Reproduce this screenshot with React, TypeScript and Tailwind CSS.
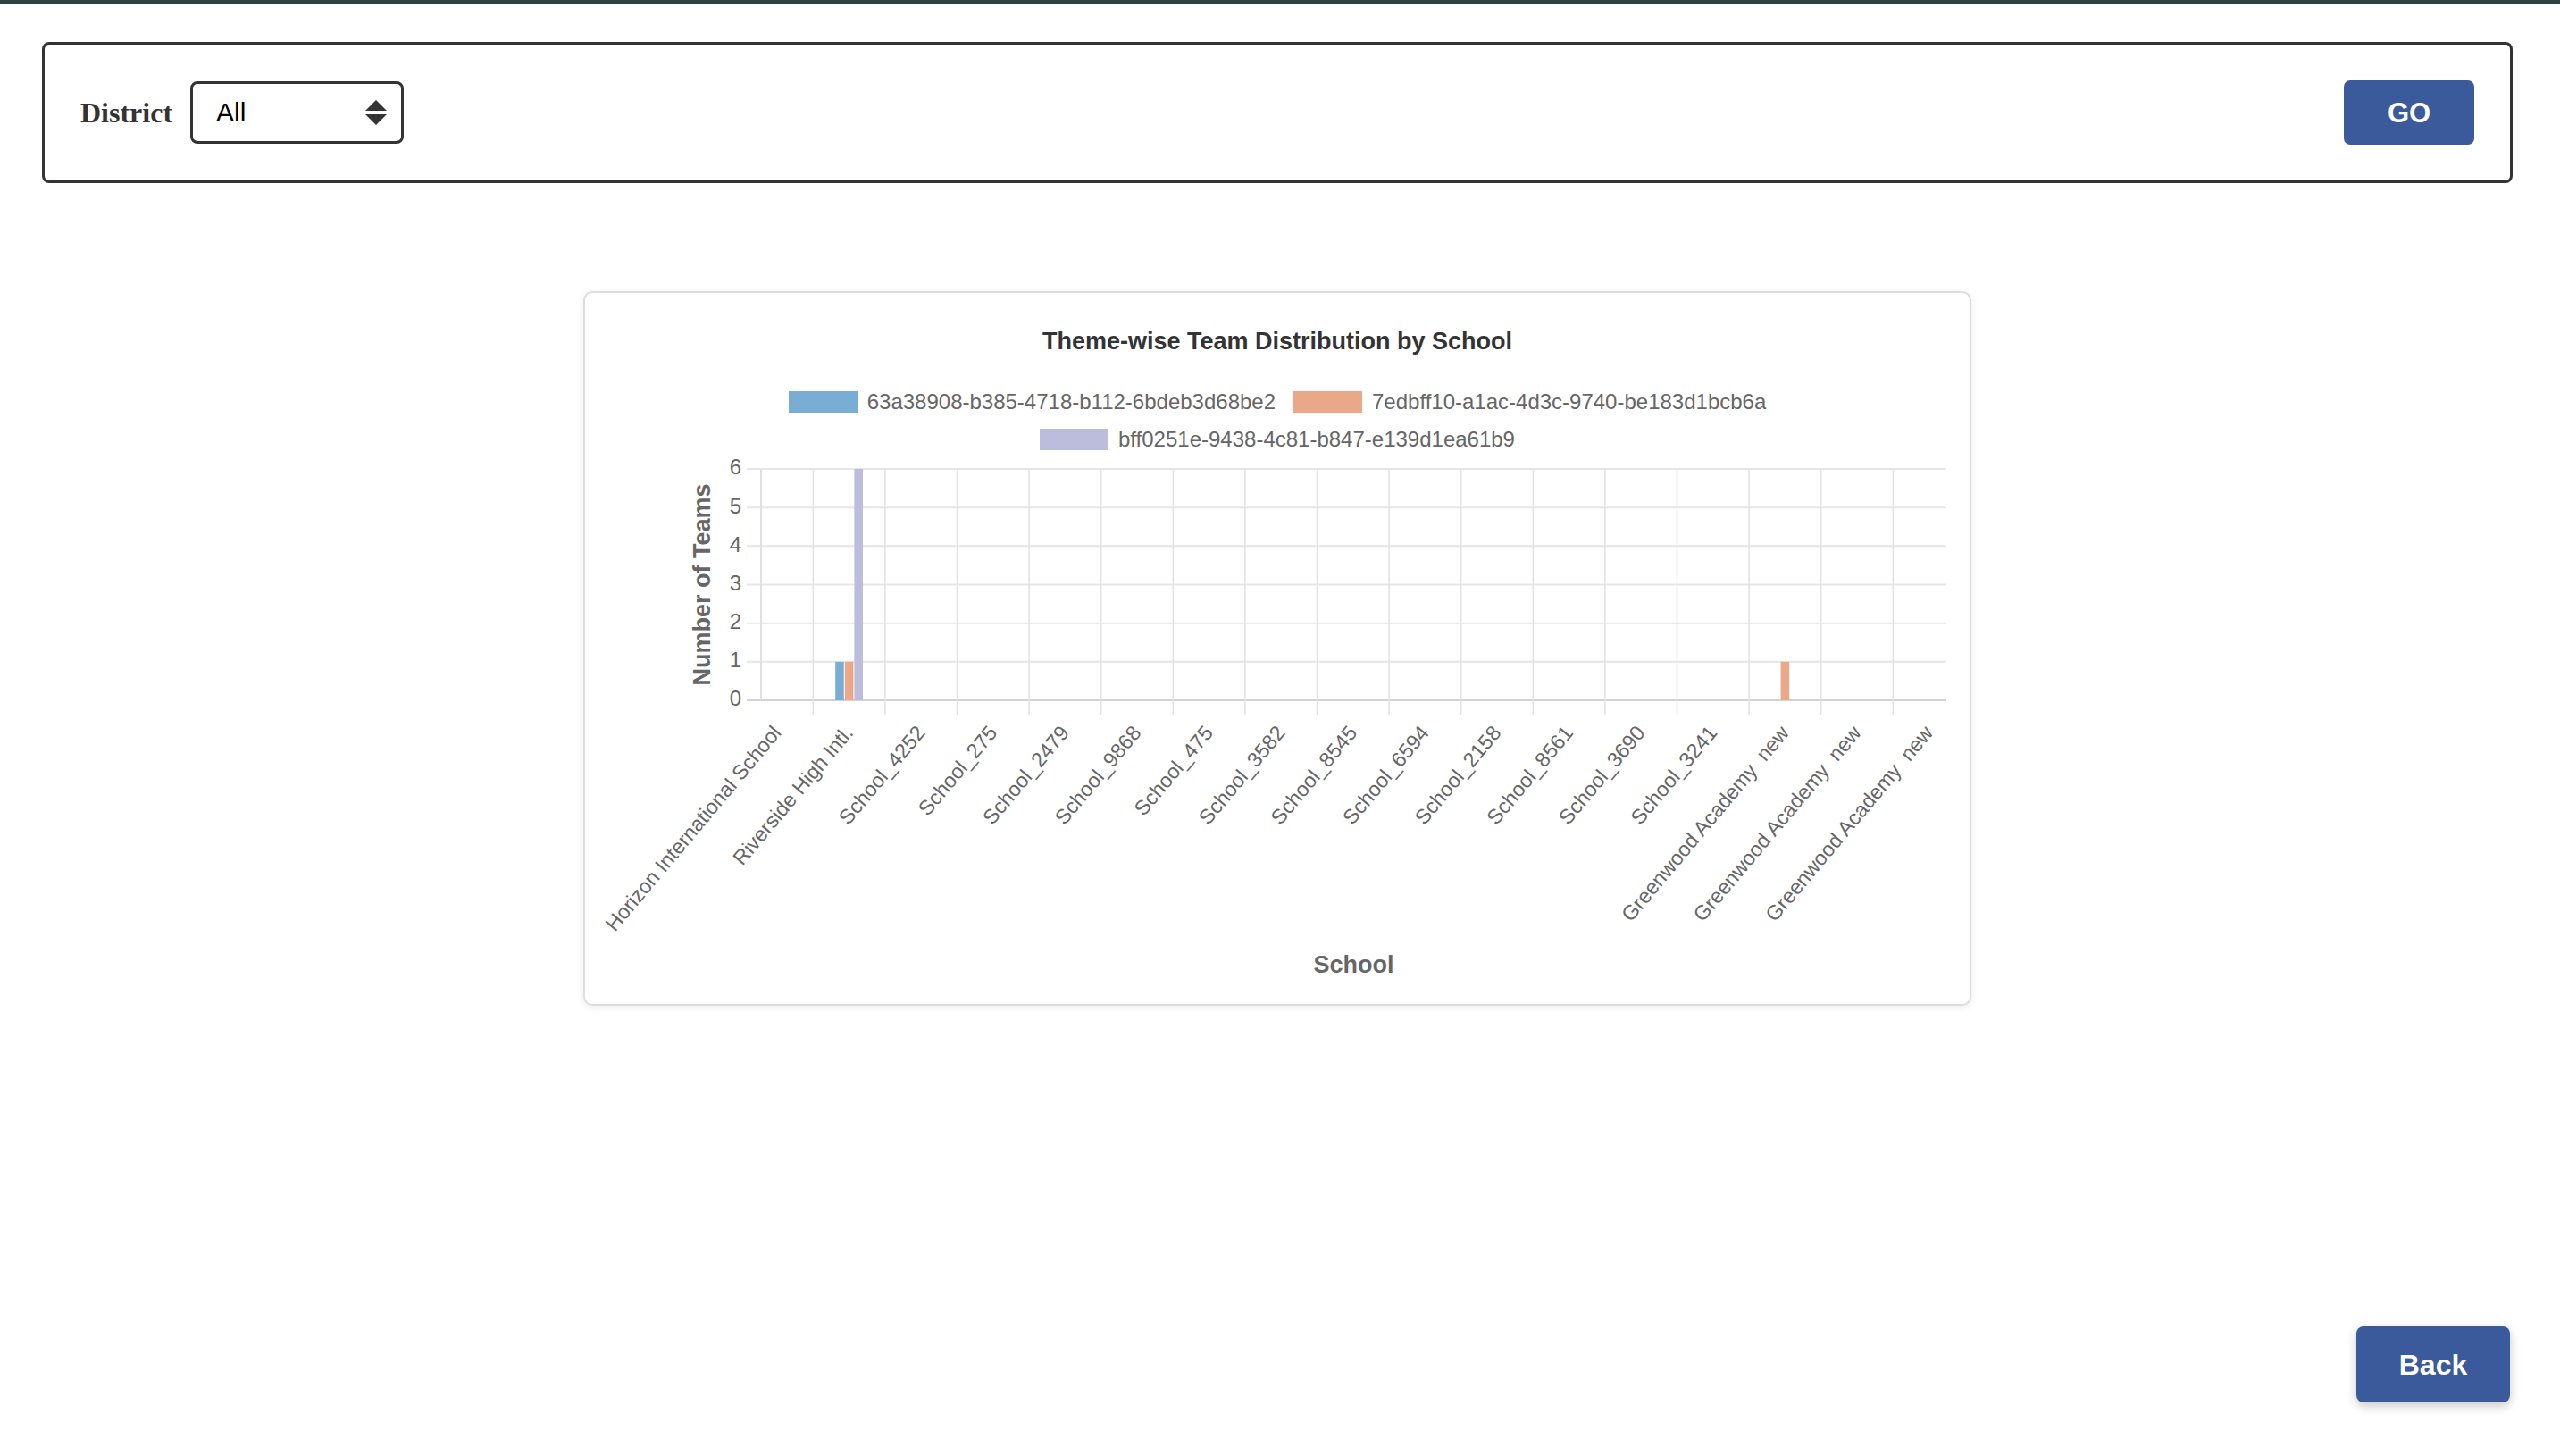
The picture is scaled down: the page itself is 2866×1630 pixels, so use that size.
import React from "react";

const schools = [
  "Horizon International School",
  "Riverside High Intl.",
  "School_4252",
  "School_275",
  "School_2479",
  "School_9868",
  "School_475",
  "School_3582",
  "School_8545",
  "School_6594",
  "School_2158",
  "School_8561",
  "School_3690",
  "School_3241",
  "Greenwood Academy  new",
  "Greenwood Academy  new",
  "Greenwood Academy  new",
];

const BLUE = "#79add3";
const ORANGE = "#eba888";
const PURPLE = "#bcbcdc";

// [blue, orange, purple] per school
const data: number[][] = schools.map((_, i) => {
  if (i === 1) return [1, 1, 6];
  if (i === 14) return [0, 1, 0];
  return [0, 0, 0];
});

function Chart() {
  const off = 9;
  const L = 197;
  const R = 1524;
  const T = 12 + off;
  const B = 271 + off;
  const unit = (B - T) / 6;
  const c0 = 215;
  const step = 80.6;
  const slot = 10.6;
  const barW = 9.6;
  const colors = [BLUE, ORANGE, PURPLE];

  return (
    <svg width={1550} height={620} className="block overflow-visible">
      {/* horizontal grid */}
      {[0, 1, 2, 3, 4, 5, 6].map((k) => {
        const y = B - k * unit;
        return (
          <line
            key={"h" + k}
            x1={L - 16}
            x2={R}
            y1={y}
            y2={y}
            stroke={k === 0 ? "#d2d2d2" : "#e6e6e6"}
            strokeWidth={2}
          />
        );
      })}
      {/* vertical grid */}
      {Array.from({ length: 16 }).map((_, i) => {
        const x = c0 + i * step + step / 2;
        return (
          <line
            key={"v" + i}
            x1={x}
            x2={x}
            y1={T}
            y2={B + 16}
            stroke="#e3e3e3"
            strokeWidth={1.6}
          />
        );
      })}
      <line x1={L} x2={L} y1={T} y2={B} stroke="#e0e0e0" strokeWidth={2} />
      {/* y ticks */}
      {[0, 1, 2, 3, 4, 5, 6].map((k) => (
        <text
          key={"yl" + k}
          x={L - 22}
          y={B - k * unit}
          textAnchor="end"
          dominantBaseline="middle"
          fontSize={24}
          fill="#666"
        >
          {k}
        </text>
      ))}
      {/* bars */}
      {data.map((vals, i) =>
        vals.map((v, j) => {
          if (!v) return null;
          const cx = c0 + i * step + (j - 1) * slot;
          return (
            <rect
              key={"b" + i + "-" + j}
              x={cx - barW / 2}
              y={B - v * unit}
              width={barW}
              height={v * unit}
              fill={colors[j]}
            />
          );
        })
      )}
      {/* x labels */}
      {schools.map((s, i) => {
        const x = c0 + i * step + 1;
        const y = 304 + off;
        return (
          <text
            key={"xl" + i}
            x={x}
            y={y}
            textAnchor="end"
            dominantBaseline="middle"
            fontSize={23.2}
            fill="#666"
            xmlSpace="preserve"
            className="whitespace-pre"
            transform={`rotate(-50 ${x} ${y})`}
          >
            {s}
          </text>
        );
      })}
      {/* axis titles */}
      <text
        x={133}
        y={(T + B) / 2}
        textAnchor="middle"
        dominantBaseline="middle"
        fontSize={27}
        fontWeight={700}
        fill="#666"
        transform={`rotate(-90 133 ${(T + B) / 2})`}
      >
        Number of Teams
      </text>
      <text
        x={(L + R) / 2}
        y={569 + off}
        textAnchor="middle"
        dominantBaseline="middle"
        fontSize={27}
        fontWeight={700}
        fill="#666"
      >
        School
      </text>
    </svg>
  );
}

function LegendItem({ color, label }: { color: string; label: string }) {
  return (
    <div className="flex items-center gap-[11px]">
      <span
        className="block w-[77px] h-[24px]"
        style={{ backgroundColor: color }}
      />
      <span className="text-[24px] leading-[24px] text-[#666]">{label}</span>
    </div>
  );
}

export default function App() {
  return (
    <div className="min-h-screen flex flex-col bg-white font-['Liberation_Sans',Arial,sans-serif]">
      <div className="h-[5px] bg-[#2f423e]" />

      <div className="mt-[42px] ml-[47px] w-[2766px] h-[158px] border-[3px] border-[#333] rounded-[8px] flex items-center justify-between px-[40px]">
        <div className="flex items-center gap-[20px]">
          <span className="font-['Liberation_Serif','Times_New_Roman',serif] font-bold text-[32px] text-[#333] leading-none">
            District
          </span>
          <div className="w-[239px] h-[70px] border-[3px] border-[#333] rounded-[8px] flex items-center justify-between pl-[26px] pr-[16px]">
            <span className="text-[30px] text-black leading-none">All</span>
            <svg width="24" height="28" viewBox="0 0 24 28">
              <polygon points="12,0 24,12 0,12" fill="#333" />
              <polygon points="0,16 24,16 12,28" fill="#333" />
            </svg>
          </div>
        </div>
        <button className="w-[146px] h-[72px] rounded-[7px] bg-[#3a5a9c] text-white font-bold text-[31px] leading-none">
          GO
        </button>
      </div>

      <div className="mt-[121px] ml-[653px] w-[1554px] h-[800px] border-2 border-[#dddddd] rounded-[10px] bg-white shadow-[0_2px_8px_rgba(0,0,0,0.08)] flex flex-col items-center pt-[38px]">
        <div className="text-[27px] leading-[32px] font-bold text-[#333]">
          Theme-wise Team Distribution by School
        </div>
        <div className="mt-[31px] h-[42px] flex items-center gap-[20px]">
          <LegendItem color={BLUE} label="63a38908-b385-4718-b112-6bdeb3d68be2" />
          <LegendItem color={ORANGE} label="7edbff10-a1ac-4d3c-9740-be183d1bcb6a" />
        </div>
        <div className="h-[33px] pt-[9px] flex items-start">
          <LegendItem color={PURPLE} label="bff0251e-9438-4c81-b847-e139d1ea61b9" />
        </div>
        <div className="self-stretch">
          <Chart />
        </div>
      </div>

      <button className="self-end mt-auto mr-[56px] mb-[60px] w-[172px] h-[85px] rounded-[8px] bg-[#3a5a9c] text-white font-bold text-[32px] leading-none shadow-[0_4px_12px_rgba(0,0,0,0.22)]">
        Back
      </button>
    </div>
  );
}
